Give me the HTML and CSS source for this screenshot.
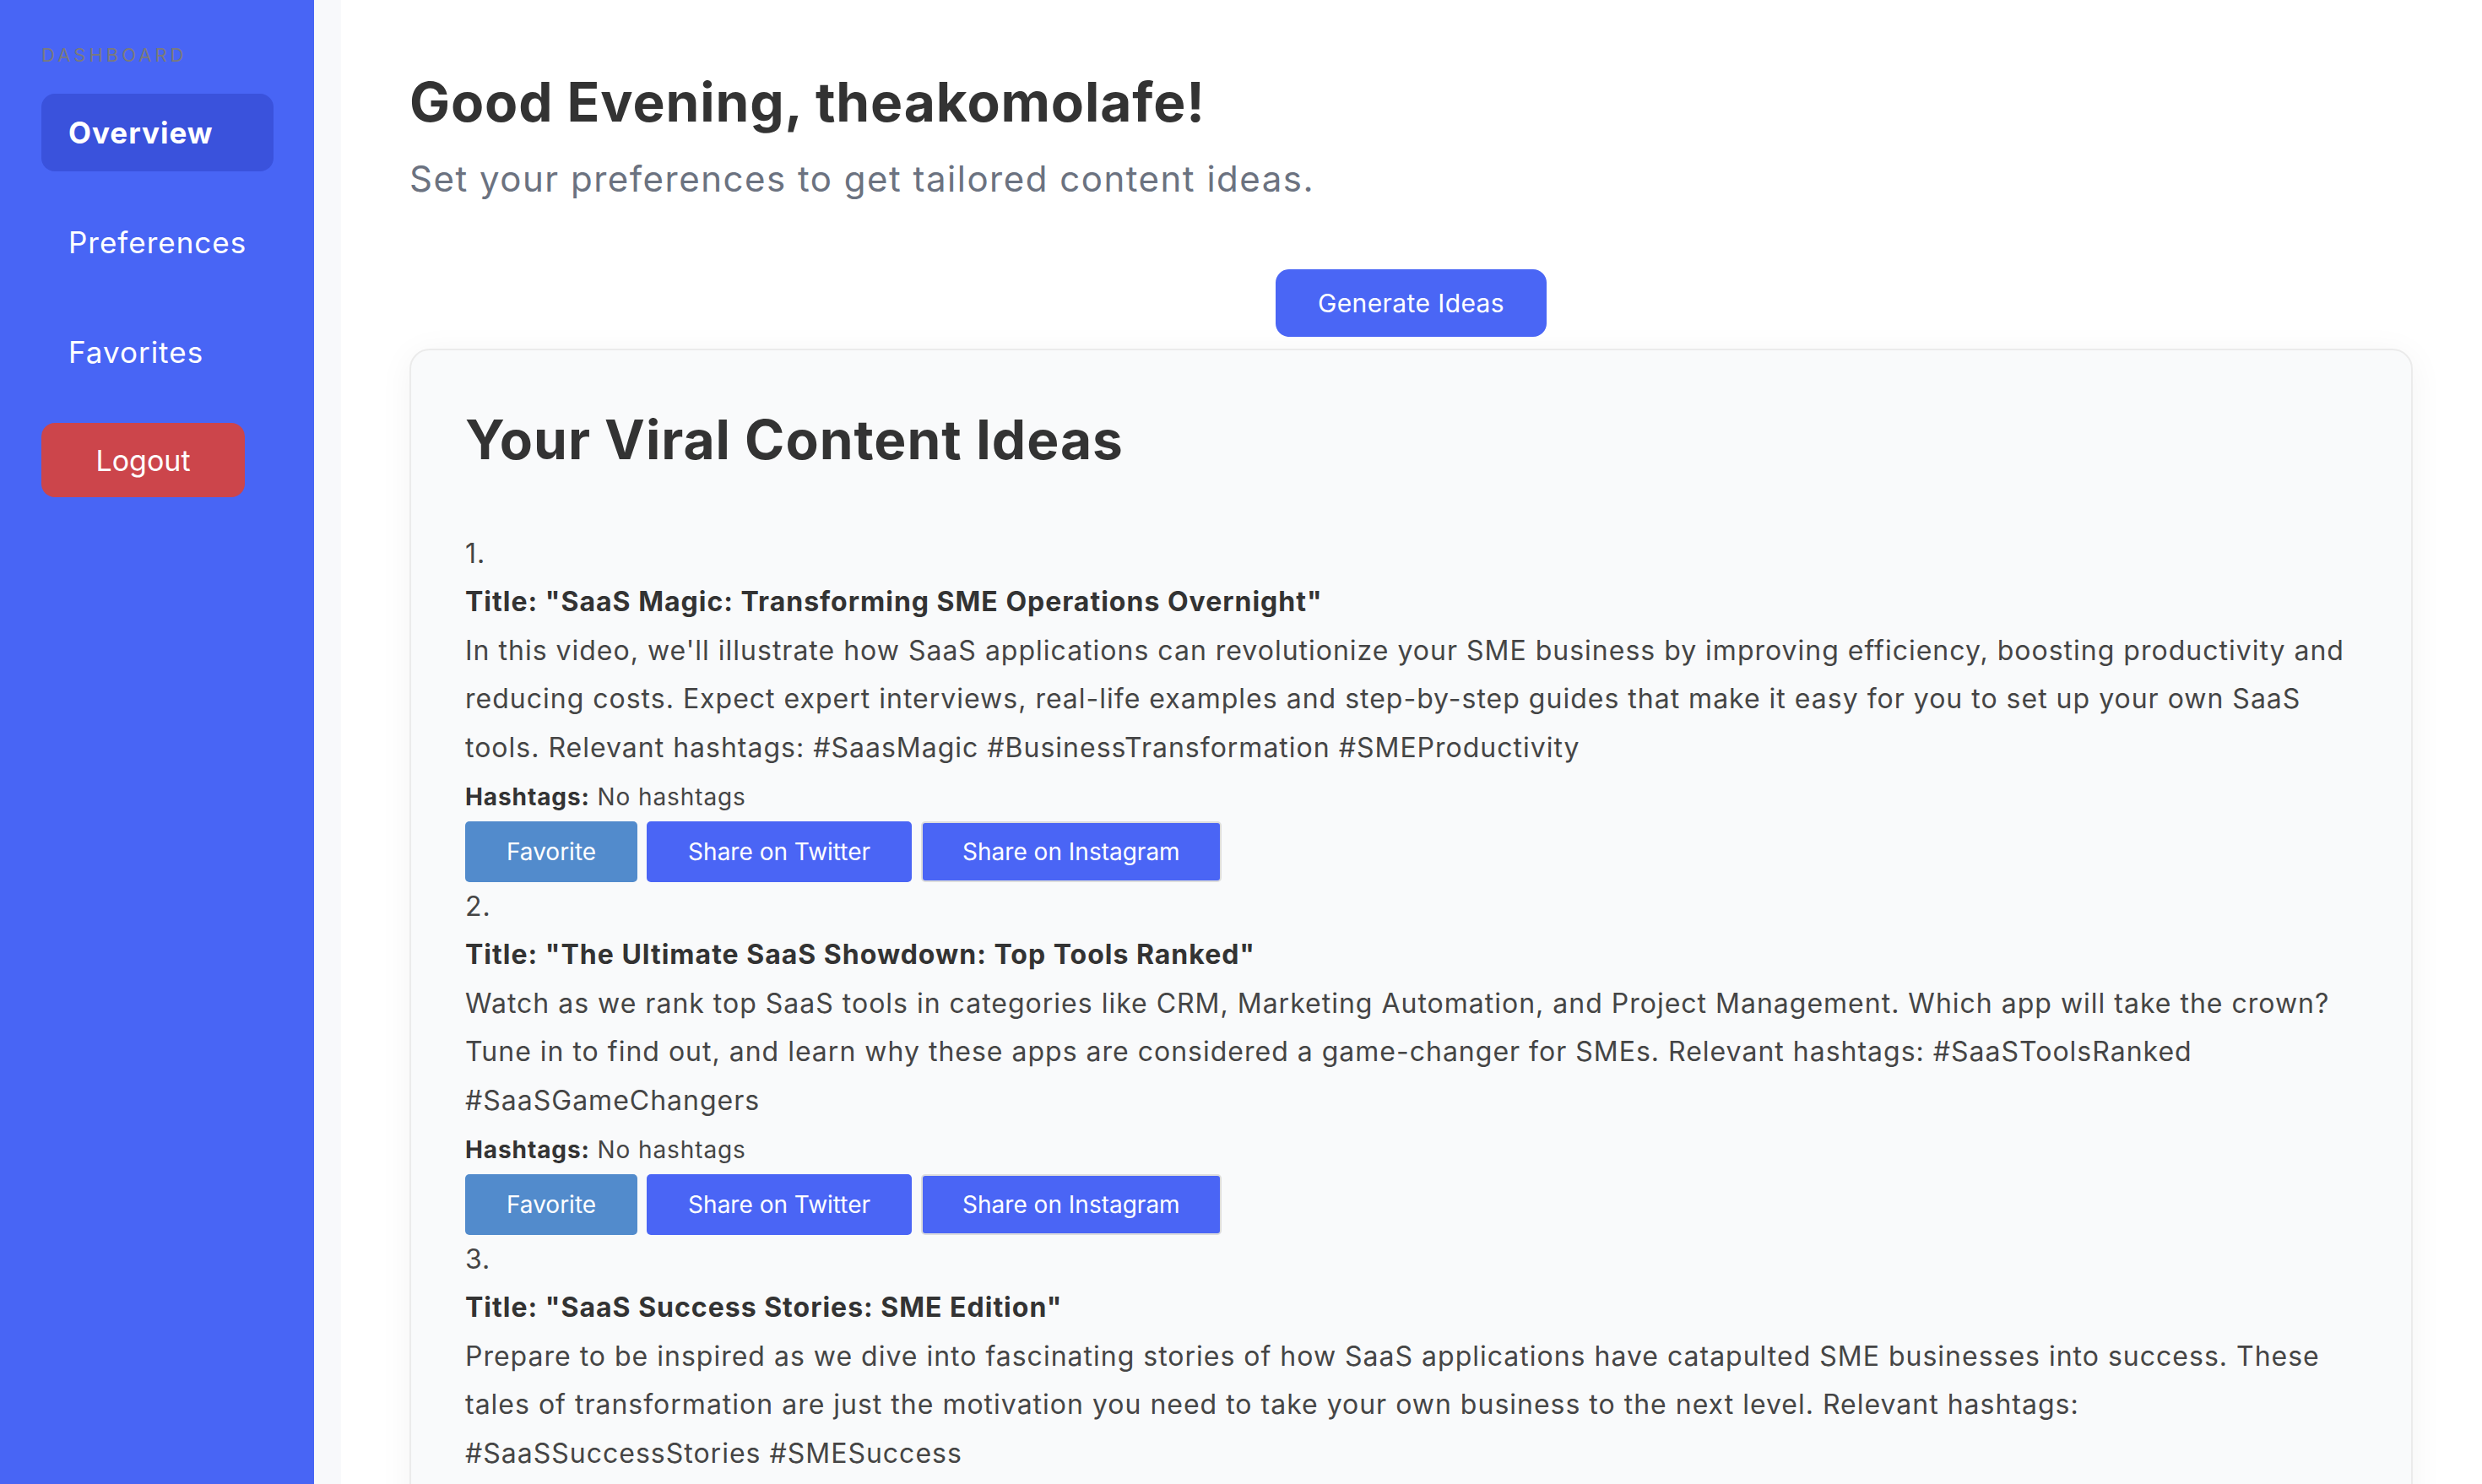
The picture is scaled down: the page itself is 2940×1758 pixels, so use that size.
FILE: index.html
```html
<!DOCTYPE html>
<html lang="en">
<head>
<meta charset="utf-8">
<title>Dashboard</title>
<link rel="stylesheet" href="styles.css">
</head>
<body>
<div class="layout">
  <aside class="sidebar">
    <div class="sidebar-label">DASHBOARD</div>
    <nav class="nav">
      <a class="nav-item active">Overview</a>
      <a class="nav-item">Preferences</a>
      <a class="nav-item">Favorites</a>
      <button class="logout">Logout</button>
    </nav>
  </aside>
  <div class="strip"></div>
  <main class="main">
    <h1 class="greeting">Good Evening, theakomolafe!</h1>
    <p class="subtitle">Set your preferences to get tailored content ideas.</p>
    <div class="generate-row">
      <button class="generate">Generate Ideas</button>
    </div>
    <section class="card">
      <h2 class="card-title">Your Viral Content Ideas</h2>
      <div class="ideas">
        <div class="idea">
          <div class="idea-num">1.</div>
          <div class="idea-title">Title: "SaaS Magic: Transforming SME Operations Overnight"</div>
          <p class="idea-desc">In this video, we'll illustrate how SaaS applications can revolutionize your SME business by improving efficiency, boosting productivity and reducing costs. Expect expert interviews, real-life examples and step-by-step guides that make it easy for you to set up your own SaaS tools. Relevant hashtags: #SaasMagic #BusinessTransformation #SMEProductivity</p>
          <div class="idea-tags"><strong>Hashtags:</strong> No hashtags</div>
          <div class="idea-actions">
            <button class="btn btn-fav">Favorite</button>
            <button class="btn btn-share">Share on Twitter</button>
            <button class="btn btn-share btn-outlined">Share on Instagram</button>
          </div>
        </div>
        <div class="idea">
          <div class="idea-num">2.</div>
          <div class="idea-title">Title: "The Ultimate SaaS Showdown: Top Tools Ranked"</div>
          <p class="idea-desc">Watch as we rank top SaaS tools in categories like CRM, Marketing Automation, and Project Management. Which app will take the crown? Tune in to find out, and learn why these apps are considered a game-changer for SMEs. Relevant hashtags: #SaaSToolsRanked #SaaSGameChangers</p>
          <div class="idea-tags"><strong>Hashtags:</strong> No hashtags</div>
          <div class="idea-actions">
            <button class="btn btn-fav">Favorite</button>
            <button class="btn btn-share">Share on Twitter</button>
            <button class="btn btn-share btn-outlined">Share on Instagram</button>
          </div>
        </div>
        <div class="idea">
          <div class="idea-num">3.</div>
          <div class="idea-title">Title: "SaaS Success Stories: SME Edition"</div>
          <p class="idea-desc">Prepare to be inspired as we dive into fascinating stories of how SaaS applications have catapulted SME businesses into success. These tales of transformation are just the motivation you need to take your own business to the next level. Relevant hashtags: #SaaSSuccessStories #SMESuccess</p>
          <div class="idea-tags"><strong>Hashtags:</strong> No hashtags</div>
          <div class="idea-actions">
            <button class="btn btn-fav">Favorite</button>
            <button class="btn btn-share">Share on Twitter</button>
            <button class="btn btn-share btn-outlined">Share on Instagram</button>
          </div>
        </div>
      </div>
    </section>
  </main>
</div>
</body>
</html>
```
FILE: styles.css
```css
* { box-sizing: border-box; }
html, body {
  margin: 0;
  padding: 0;
  background: #ffffff;
  font-family: Inter, "Noto Sans", sans-serif;
}
.layout {
  display: flex;
  min-height: 100vh;
}
.sidebar {
  width: 372px;
  flex: 0 0 372px;
  background: #4865f5;
  padding: 52px 48px 0 49px;
}
.sidebar-label {
  font-size: 22px;
  line-height: 27px;
  letter-spacing: 4px;
  color: #7b7b7b;
}
.nav {
  display: flex;
  flex-direction: column;
  align-items: flex-start;
  gap: 38px;
  margin-top: 32px;
}
.nav-item {
  display: block;
  width: 100%;
  height: 92px;
  padding: 0 32px;
  border-radius: 16px;
  color: #ffffff;
  font-size: 35px;
  line-height: 92px;
  letter-spacing: 1px;
}
.nav-item.active {
  background: #3a52dc;
  font-weight: 700;
}
.logout {
  height: 88px;
  width: 241px;
  border: none;
  border-radius: 16px;
  background: #cc454b;
  color: #ffffff;
  font-family: inherit;
  font-size: 34px;
  padding: 0;
}
.strip {
  width: 32px;
  flex: 0 0 32px;
  background: #f8f9fb;
}
.main {
  flex: 1;
  padding: 82px 82px 0 81px;
}
.greeting {
  margin: 0;
  font-size: 64px;
  font-weight: 700;
  color: #333333;
  line-height: 1.21;
  letter-spacing: 0.9px;
}
.subtitle {
  margin: 28px 0 0;
  font-size: 42px;
  line-height: 1.21;
  color: #6b7280;
  letter-spacing: 1.5px;
}
.generate-row {
  display: flex;
  justify-content: center;
  margin-top: 81px;
}
.generate {
  height: 80px;
  padding: 0 50px;
  border: none;
  border-radius: 16px;
  background: #4a66f5;
  color: #ffffff;
  font-family: inherit;
  font-size: 30px;
  letter-spacing: 0.4px;
}
.card {
  margin-top: 14px;
  background: #f9fafb;
  border: 2px solid #ebebeb;
  border-radius: 24px;
  padding: 67px 64px 64px;
  box-shadow: 0 6px 40px rgba(0, 0, 0, 0.05);
}
.card-title {
  margin: 0;
  font-size: 64px;
  font-weight: 700;
  color: #333333;
  line-height: 1.21;
  letter-spacing: 1px;
}
.ideas {
  margin-top: 67px;
}
.idea {
  color: #454545;
  font-size: 32px;
  line-height: 57.6px;
  letter-spacing: 1px;
}
.idea-title {
  font-weight: 700;
  color: #333333;
}
.idea-desc {
  margin: 0;
}
.idea-tags {
  font-size: 28px;
  line-height: 58px;
  letter-spacing: 0.9px;
}
.idea-tags strong {
  color: #333333;
}
.idea-actions {
  display: flex;
  gap: 11px;
}
.btn {
  height: 72px;
  padding: 0 47px;
  border: 2px solid transparent;
  border-radius: 5px;
  color: #ffffff;
  font-family: inherit;
  font-size: 28px;
  letter-spacing: 0;
}
.btn-fav {
  background: #528bcc;
}
.btn-share {
  background: #4a65f5;
}
.btn-outlined {
  border-color: #dddddd;
}
```
